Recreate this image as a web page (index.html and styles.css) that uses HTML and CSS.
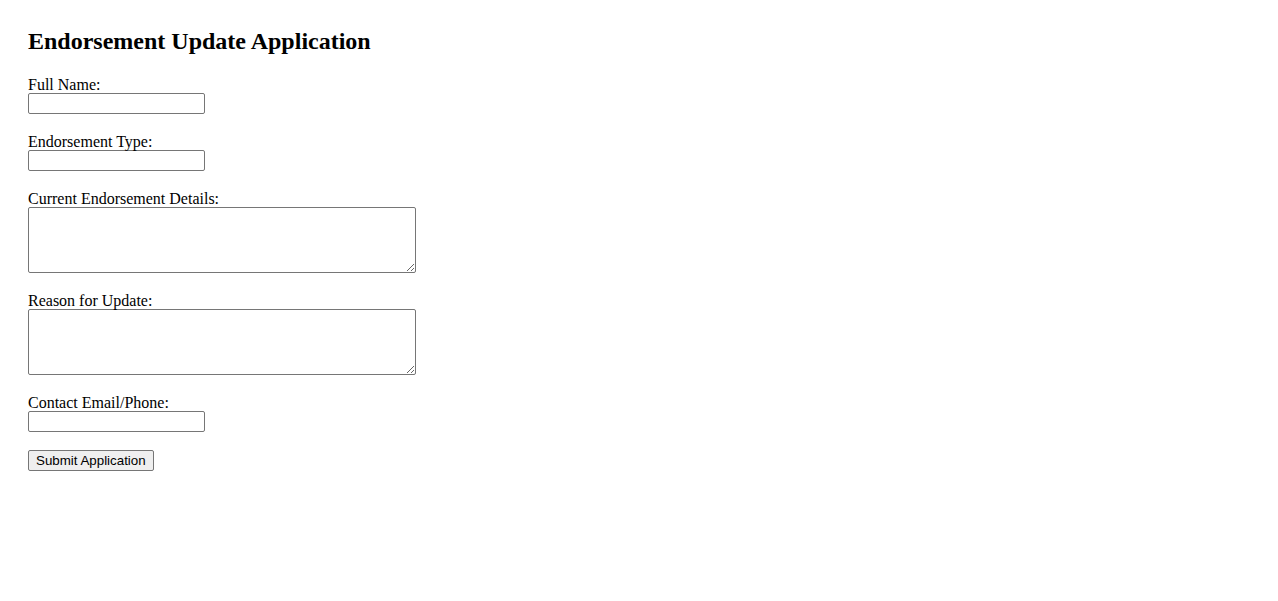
FILE: index.html
```html
<!DOCTYPE html>
<html lang="en">
<head>
<meta charset="utf-8">
<title>Endorsement Update Application</title>
<link rel="stylesheet" href="styles.css">
</head>
<body>
<h2 class="title">Endorsement Update Application</h2>
<form class="form">
  <div class="field">
    <label class="label" for="name">Full Name:</label>
    <input class="input" type="text" id="name">
  </div>
  <div class="field">
    <label class="label" for="type">Endorsement Type:</label>
    <input class="input" type="text" id="type">
  </div>
  <div class="field">
    <label class="label" for="current">Current Endorsement Details:</label>
    <textarea class="area" id="current" rows="4"></textarea>
  </div>
  <div class="field">
    <label class="label" for="reason">Reason for Update:</label>
    <textarea class="area" id="reason" rows="4"></textarea>
  </div>
  <div class="field">
    <label class="label" for="contact">Contact Email/Phone:</label>
    <input class="input" type="text" id="contact">
  </div>
  <button class="submit" type="submit">Submit Application</button>
</form>
</body>
</html>
```

FILE: styles.css
```css
body {
  margin: 8px;
  padding: 20px;
  font-family: "Liberation Serif", "Times New Roman", serif;
  font-size: 16px;
  color: #000;
  background: #fff;
}

.title {
  margin: 0 0 20px 0;
  font-size: 24px;
  font-weight: bold;
}

.form {
  margin: 0;
}

.field {
  margin-bottom: 18px;
}

.label {
  display: block;
  line-height: 16px;
  padding-top: 2px;
}

.input {
  display: block;
  box-sizing: border-box;
  width: 177px;
  height: 21px;
  margin: 0;
  padding: 1px 2px;
  border: 1px solid #767676;
  border-radius: 2px;
  font-family: "Liberation Sans", Arial, sans-serif;
  font-size: 13.33px;
}

.area {
  display: block;
  box-sizing: border-box;
  width: 388px;
  height: 66px;
  margin: 0;
  padding: 2px;
  border: 1px solid #767676;
  border-radius: 2px;
  font-family: "Liberation Mono", monospace;
  font-size: 13.33px;
}

.submit {
  display: block;
  box-sizing: border-box;
  height: 21px;
  margin: 0;
  padding: 1px 7px;
  border: 1px solid #767676;
  border-radius: 2px;
  background: #efefef;
  font-family: "Liberation Sans", Arial, sans-serif;
  font-size: 13.33px;
  color: #000;
}
```
